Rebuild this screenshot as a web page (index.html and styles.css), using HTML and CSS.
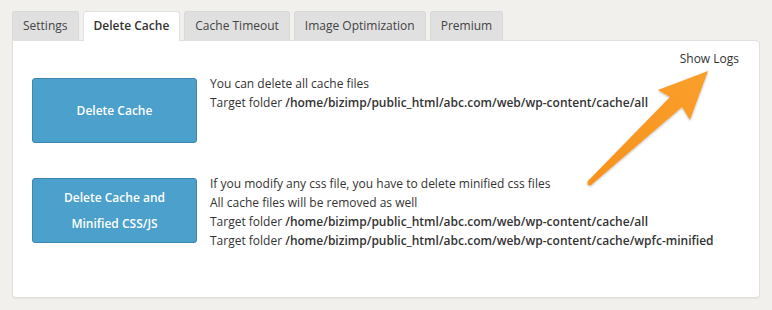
FILE: index.html
```html
<!DOCTYPE html>
<html lang="en">
<head>
    <meta charset="UTF-8">
    <meta name="viewport" content="width=device-width, initial-scale=1.0">
    <title>Delete Cache</title>
    <link rel="stylesheet" href="styles.css">
</head>
<body>
    <div class="wrap">
        <div class="tabs">
            <div class="tab">Settings</div>
            <div class="tab active">Delete Cache</div>
            <div class="tab">Cache Timeout</div>
            <div class="tab">Image Optimization</div>
            <div class="tab">Premium</div>
        </div>

        <div class="panel">
            <div class="logs-row">
                <a class="show-logs">Show Logs</a>
            </div>

            <div class="cache-row">
                <button class="cache-button">Delete Cache</button>
                <div class="cache-info">
                    <div>You can delete all cache files</div>
                    <div>Target folder <b>/home/bizimp/public_html/abc.com/web/wp-content/cache/all</b></div>
                </div>
            </div>

            <div class="cache-row">
                <button class="cache-button">Delete Cache and<br>Minified CSS/JS</button>
                <div class="cache-info">
                    <div>If you modify any css file, you have to delete minified css files</div>
                    <div>All cache files will be removed as well</div>
                    <div>Target folder <b>/home/bizimp/public_html/abc.com/web/wp-content/cache/all</b></div>
                    <div>Target folder <b>/home/bizimp/public_html/abc.com/web/wp-content/cache/wpfc-minified</b></div>
                </div>
            </div>

            <svg class="arrow" width="150" height="135" viewBox="0 0 150 135">
                <defs>
                    <linearGradient id="arrowFill" x1="0" y1="1" x2="1" y2="0">
                        <stop offset="0" stop-color="#f7921c"/>
                        <stop offset="1" stop-color="#fa9f2c"/>
                    </linearGradient>
                    <filter id="arrowShadow" x="-20%" y="-20%" width="140%" height="140%">
                        <feDropShadow dx="0" dy="1" stdDeviation="1.2" flood-color="#000" flood-opacity="0.3"/>
                    </filter>
                </defs>
                <path d="M138,11 L88,30 L100,37 L18,121 Q16,126 21,125 L112,47 L120,60 Z" fill="url(#arrowFill)" filter="url(#arrowShadow)"/>
            </svg>
        </div>
    </div>
</body>
</html>
```

FILE: styles.css
```css
body {
    margin: 0;
    background-color: #f1f0ec;
    font-family: "Open Sans", sans-serif;
    font-size: 12px;
    color: #333;
}
.wrap {
    padding: 11px 12px 13px 12px;
}
.tabs {
    display: flex;
    gap: 4px;
    height: 29px;
}
.tab {
    background-color: #e0e0e0;
    border: 1px solid #d8d8d8;
    border-bottom: none;
    border-radius: 3px 3px 0 0;
    padding: 0 10px;
    line-height: 28px;
    font-size: 12px;
    color: #444;
}
.tab.active {
    background-color: white;
    border-color: #e2e2e2;
    color: #333;
    font-weight: 600;
    position: relative;
    z-index: 1;
    height: 29px;
}
.panel {
    position: relative;
    background-color: white;
    border: 1px solid #dfdfdc;
    border-radius: 0 4px 4px 4px;
    box-shadow: 0 1px 1px rgba(0,0,0,0.05);
    height: 258px;
    box-sizing: border-box;
    padding: 8px 20px 0 19px;
}
.logs-row {
    display: flex;
    justify-content: flex-end;
    line-height: 19px;
    height: 19px;
}
.show-logs {
    color: #333;
    cursor: pointer;
}
.cache-row {
    display: flex;
    align-items: flex-start;
    gap: 13px;
    margin-top: 6px;
}
.cache-row + .cache-row {
    margin-top: 31px;
}
.cache-button {
    margin-top: 4px;
    width: 165px;
    height: 65px;
    flex-shrink: 0;
    background-color: #4ba0cc;
    border: 1px solid #3b87b1;
    border-radius: 3px;
    color: white;
    font-family: "Open Sans", sans-serif;
    font-size: 12px;
    font-weight: 600;
    line-height: 26px;
    cursor: pointer;
}
.cache-info {
    line-height: 19px;
}
.cache-info b {
    font-weight: 600;
}
.arrow {
    position: absolute;
    left: 557px;
    top: 19px;
}
```
